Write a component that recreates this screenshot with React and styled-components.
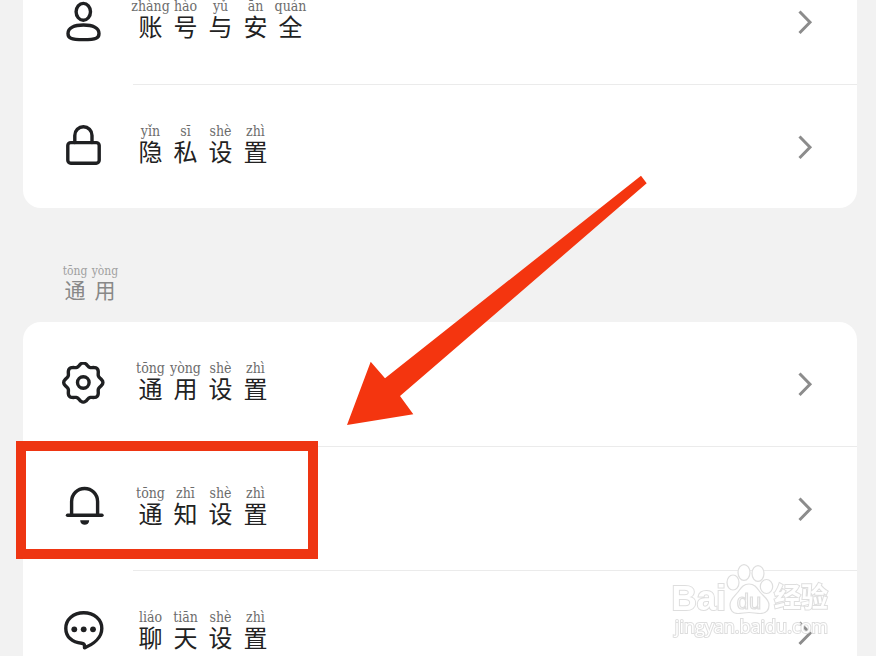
import styled, { createGlobalStyle } from 'styled-components';

const GlobalStyle = createGlobalStyle`
  * {
    box-sizing: border-box;
  }

  body {
    margin: 0;
    overflow: hidden;
    background: #f2f2f2;
    color: #222;
    font-family: 'Liberation Sans', 'Noto Sans CJK SC', sans-serif;
  }
`;

/* the list is scrolled a little, so the first row is cut by the window */
const Page = styled.main`
  height: 100vh;
  overflow: hidden;
  padding: 0 19px 0 23px;
`;

const Scrolled = styled.div`
  margin-top: -40px;
`;

const Card = styled.section`
  position: relative;
  background: #fff;
  border-radius: 18px;
`;

const SectionTitle = styled.h2`
  display: flex;
  align-items: center;
  height: 114px;
  margin: 0;
  padding: 40px 37px 0;
  color: #888;
  font-weight: 400;
`;

const Row = styled.a`
  position: relative;
  display: flex;
  align-items: center;
  gap: 28px;
  height: 124px;
  padding-left: 38px;
  color: inherit;
  text-decoration: none;
`;

const RowBody = styled.span`
  flex: 1;
  display: flex;
  align-items: center;
  justify-content: space-between;
  height: 100%;
  padding-right: 44px;

  ${Row} + ${Row} & {
    border-top: 1px solid #ebebeb;
  }
`;

const IconBox = styled.svg`
  flex: none;
  width: 44px;
  height: 44px;
  fill: none;
  stroke: #1f2022;
  stroke-width: 3.4;
  stroke-linecap: round;
  stroke-linejoin: round;
`;

const Chevron = styled.svg`
  width: 16px;
  height: 26px;
  fill: none;
  stroke: #8c8c8c;
  stroke-width: 3;
`;

const Phrase = styled.span`
  display: flex;
  padding-bottom: 4px;
`;

const Syllable = styled.span`
  display: flex;
  flex-direction: column;
  align-items: center;
  width: ${({ $small }) => ($small ? 30 : 35)}px;
  white-space: nowrap;
`;

const Pinyin = styled.span`
  font-family: 'DejaVu Serif Condensed', 'DejaVu Serif', serif;
  font-size: ${({ $small }) => ($small ? 12 : 14)}px;
  line-height: 16px;
  color: ${({ $small }) => ($small ? '#a0a0a0' : '#6c6c6c')};
`;

const Hanzi = styled.span`
  font-size: ${({ $small }) => ($small ? 21 : 24)}px;
  line-height: ${({ $small }) => ($small ? 24 : 28)}px;
`;

const Highlight = styled.span`
  position: absolute;
  top: -5px;
  left: -7px;
  width: 302px;
  height: 118px;
  border: 10px solid #ee3512;
  pointer-events: none;
`;

const Arrow = styled.svg`
  position: absolute;
  top: -147px;
  left: 324px;
  width: 300px;
  height: 250px;
  fill: #f4350f;
  pointer-events: none;
`;

const Watermark = styled.div`
  position: fixed;
  right: 48px;
  bottom: 18px;
  display: flex;
  flex-direction: column;
  color: #fff;
  -webkit-text-stroke: 2px #dedede;
  paint-order: stroke fill;
  pointer-events: none;
`;

const Brand = styled.div`
  display: flex;
  align-items: flex-end;
  justify-content: space-between;
  height: 50px;
`;

const BrandName = styled.span`
  font-size: 35px;
  font-weight: 700;
  line-height: 32px;
`;

const BrandSuffix = styled.span`
  font-size: 27px;
  font-weight: 700;
  line-height: 32px;
`;

const Paw = styled.svg`
  width: 48px;
  height: 50px;
  fill: #fff;
  stroke: #dedede;
  stroke-width: 1.2;
  paint-order: normal;
  -webkit-text-stroke: 0;
`;

const Site = styled.span`
  font-family: 'Open Sans', sans-serif;
  font-size: 18px;
  line-height: 24px;
  text-align: right;
`;

// eight rounded teeth around the centre of the icon
const gearPath =
  Array.from({ length: 96 }, (_, i) => {
    const angle = (i / 96) * Math.PI * 2;
    const radius = 18 + 1.6 * Math.cos(angle * 8);
    const x = 22.3 + radius * Math.cos(angle);
    const y = 20.5 + radius * Math.sin(angle);
    return `${i ? 'L' : 'M'}${x.toFixed(2)} ${y.toFixed(2)}`;
  }).join('') + 'Z';

const icons = {
  account: (
    <>
      <ellipse cx='22.3' cy='11.8' rx='7.2' ry='8.4' />
      <path d='M7 33.5C7 28 13 25 22.5 25S38 28 38 33.5C38 38 35.5 39.6 22.5 39.6S7 38 7 33.5Z' />
    </>
  ),
  privacy: (
    <>
      <rect x='6.8' y='18.6' width='31.4' height='20.6' rx='3' />
      <path d='M13.8 18.6V11.4a8.6 8.6 0 0 1 17.2 0v7.2' />
    </>
  ),
  general: (
    <>
      <path d={gearPath} />
      <circle cx='22.3' cy='20.5' r='5.8' />
    </>
  ),
  notice: (
    <>
      <path d='M6.5 29.2H41' />
      <path d='M10.6 29V15.5a13 13 0 0 1 26 0V29' />
      <path d='M19.2 34.2h9c0 6-9 6-9 0Z' fill='#1f2022' stroke='none' />
    </>
  ),
  chat: (
    <>
      <path d='M22.7 2.8C12.2 2.8 4.8 9.6 4.8 18.4c0 8.2 6.2 14 15.8 14.9 1.8.2 2.8.9 2.9 2.4v2.1c9-3.6 17.3-10.3 17.3-19.4 0-8.8-7.6-15.6-18.1-15.6Z' />
      <g fill='#1f2022' stroke='none'>
        <circle cx='13.3' cy='19.3' r='2.9' />
        <circle cx='22.7' cy='19.3' r='2.9' />
        <circle cx='32' cy='19.3' r='2.9' />
      </g>
    </>
  ),
};

const accountItems = [
  { icon: 'account', text: '账号与安全', pinyin: 'zhàng hào yǔ ān quán' },
  { icon: 'privacy', text: '隐私设置', pinyin: 'yǐn sī shè zhì' },
];

const generalItems = [
  { icon: 'general', text: '通用设置', pinyin: 'tōng yòng shè zhì' },
  {
    icon: 'notice',
    text: '通知设置',
    pinyin: 'tōng zhī shè zhì',
    highlighted: true,
  },
  { icon: 'chat', text: '聊天设置', pinyin: 'liáo tiān shè zhì' },
];

function Annotated({ text, pinyin, small }) {
  const syllables = pinyin.split(' ');

  return (
    <Phrase>
      {[...text].map((char, i) => (
        <Syllable key={i} $small={small}>
          <Pinyin $small={small}>{syllables[i]}</Pinyin>
          <Hanzi $small={small}>{char}</Hanzi>
        </Syllable>
      ))}
    </Phrase>
  );
}

function SettingRow({ icon, text, pinyin, highlighted }) {
  return (
    <Row href={`#${icon}`} aria-label={text}>
      <IconBox viewBox='0 0 44 44' aria-hidden='true'>
        {icons[icon]}
      </IconBox>
      <RowBody>
        <Annotated text={text} pinyin={pinyin} />
        <Chevron viewBox='0 0 16 26' aria-hidden='true'>
          <path d='M2.5 2.5 13 13.2 2.5 24' />
        </Chevron>
      </RowBody>
      {highlighted && <Highlight />}
    </Row>
  );
}

export default function App() {
  return (
    <Page>
      <GlobalStyle />
      <Scrolled>
        <Card>
          {accountItems.map((item) => (
            <SettingRow key={item.icon} {...item} />
          ))}
        </Card>
        <SectionTitle>
          <Annotated text='通用' pinyin='tōng yòng' small />
        </SectionTitle>
        <Card>
          {generalItems.map((item) => (
            <SettingRow key={item.icon} {...item} />
          ))}
          <Arrow viewBox='0 0 300 250' aria-hidden='true'>
            <path d='M0 250 23.7 186.7 38 203.3 294 .7 299.7 8.3 53 221 66.3 239.3Z' />
          </Arrow>
        </Card>
      </Scrolled>
      <Watermark>
        <Brand>
          <BrandName>Bai</BrandName>
          <Paw viewBox='0 0 48 50' aria-hidden='true'>
            <ellipse cx='7' cy='18.5' rx='6' ry='7.5' />
            <ellipse cx='18' cy='8.5' rx='6' ry='7.8' />
            <ellipse cx='32' cy='9.5' rx='6' ry='7.8' />
            <ellipse cx='40.5' cy='22.5' rx='6.2' ry='7' />
            <path d='M23 20c6 0 8 4 11 8s9 7 9 13-4 8.500-9 8.500c-4 0-7-1-11-1s-7 1-11 1c-5 0-8-3-8-8.500 0-6 5-9 8-13s5-8 11-8Z' />
            <text
              x='23'
              y='45'
              textAnchor='middle'
              fontSize='22'
              fontFamily='Liberation Sans'
            >
              du
            </text>
          </Paw>
          <BrandSuffix>经验</BrandSuffix>
        </Brand>
        <Site>jingyan.baidu.com</Site>
      </Watermark>
    </Page>
  );
}
